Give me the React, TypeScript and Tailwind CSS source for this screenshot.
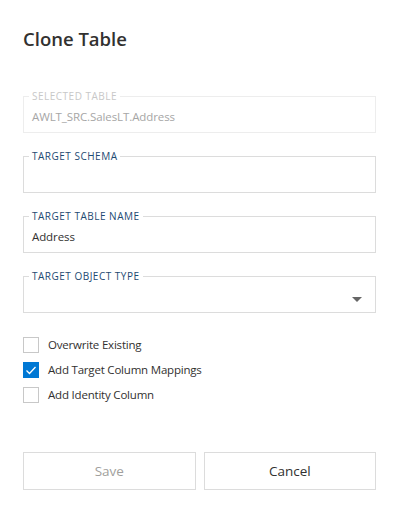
import React, { useState } from "react";

const font = { fontFamily: '"Open Sans", "Noto Sans", sans-serif' };

function Field({
  label,
  value,
  disabled,
  select,
}: {
  label: string;
  value?: string;
  disabled?: boolean;
  select?: boolean;
}) {
  return (
    <fieldset
      className={`border ${disabled ? "border-[#ededed]" : "border-[#dcdcdc]"} px-2`}
    >
      <legend
        className={`ml-[-3px] px-[3px] text-[10px] leading-[12px] tracking-[0.5px] ${
          disabled ? "text-[#c8c8c8]" : "text-[#1d4a72]"
        }`}
      >
        {label}
      </legend>
      <div className="flex h-[30px] items-start justify-between pt-[7px]">
        <span
          className={`text-[11.5px] leading-[16px] tracking-[-0.1px] ${
            disabled ? "text-[#a6a6a6]" : "text-[#323130]"
          }`}
        >
          {value ?? ""}
        </span>
        {select && (
          <svg width="10" height="5" viewBox="0 0 10 5" className="mr-[5px] mt-[8px]">
            <path d="M0 0 L10 0 L5 5 Z" fill="#666666" />
          </svg>
        )}
      </div>
    </fieldset>
  );
}

function Check({ label, checked, onClick }: { label: string; checked: boolean; onClick: () => void }) {
  return (
    <div className="flex h-[25px] cursor-pointer items-start gap-[9px]" onClick={onClick}>
      <div
        className={`flex h-4 w-4 items-center justify-center border ${
          checked ? "border-[#0078d4] bg-[#0078d4]" : "border-[#c8c8c8] bg-white"
        }`}
      >
        {checked && (
          <svg width="12" height="12" viewBox="0 0 12 12">
            <path d="M1.5 6.5 L4.5 9.5 L10.5 3" fill="none" stroke="white" strokeWidth="1.3" />
          </svg>
        )}
      </div>
      <span className="text-[11.5px] leading-[16px] tracking-[-0.2px] text-[#323130]">{label}</span>
    </div>
  );
}

export default function App() {
  const [checks, setChecks] = useState([false, true, false]);
  const toggle = (i: number) => setChecks(checks.map((c, j) => (j === i ? !c : c)));

  return (
    <div className="h-[515px] w-[399px] bg-white px-[23px] pt-[26px]" style={font}>
      <h1 className="text-[18.5px] font-semibold leading-[26px] text-[#323130]">Clone Table</h1>

      <div className="mt-[38px] flex flex-col gap-[17px]">
        <Field label="SELECTED TABLE" value="AWLT_SRC.SalesLT.Address" disabled />
        <Field label="TARGET SCHEMA" />
        <Field label="TARGET TABLE NAME" value="Address" />
        <Field label="TARGET OBJECT TYPE" select />
      </div>

      <div className="mt-[24px] flex flex-col">
        <Check label="Overwrite Existing" checked={checks[0]} onClick={() => toggle(0)} />
        <Check label="Add Target Column Mappings" checked={checks[1]} onClick={() => toggle(1)} />
        <Check label="Add Identity Column" checked={checks[2]} onClick={() => toggle(2)} />
      </div>

      <div className="mt-[40px] flex gap-2">
        <button className="h-[38px] flex-1 border border-[#dcdcdc] text-[13.5px] text-[#a19f9d]" disabled>
          Save
        </button>
        <button className="h-[38px] flex-1 border border-[#dcdcdc] text-[13.5px] text-[#323130]">
          Cancel
        </button>
      </div>
    </div>
  );
}
